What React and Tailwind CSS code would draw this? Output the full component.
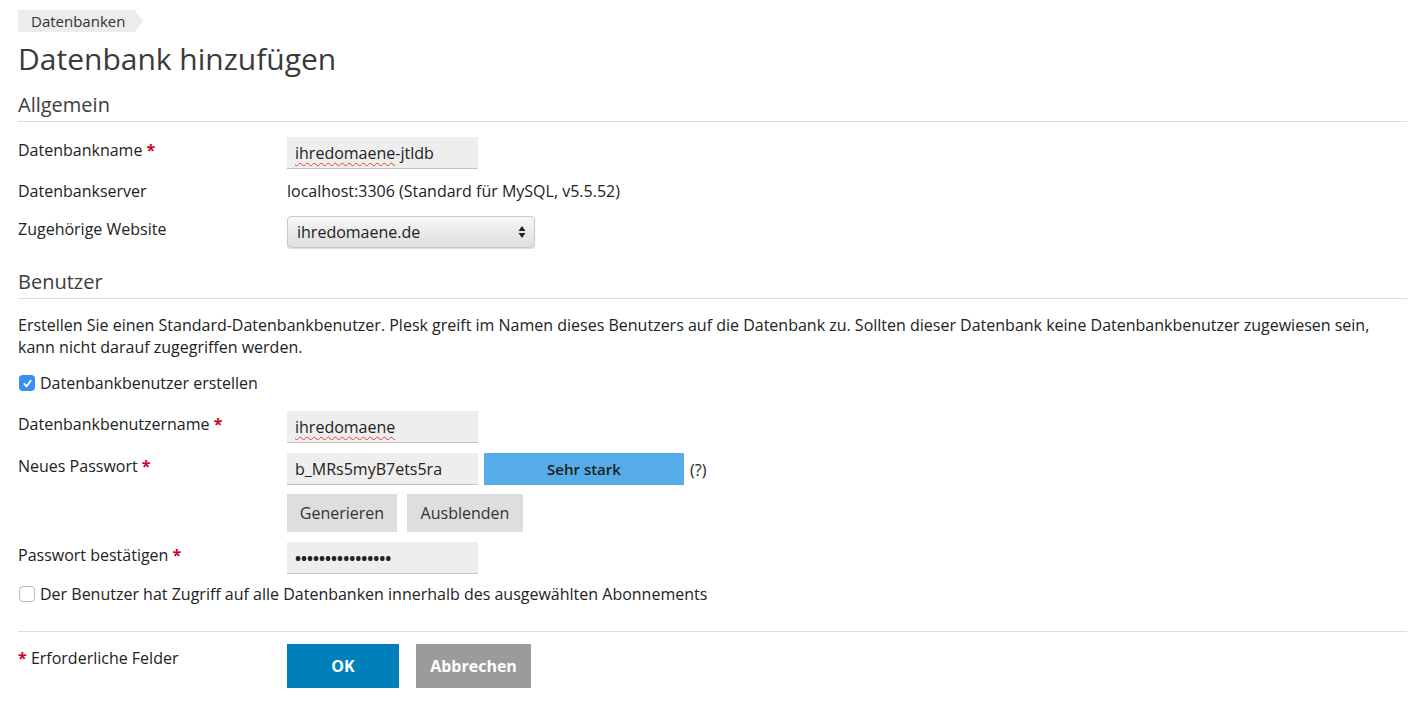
import React from "react";

const Req = () => <span className="text-[#d0021b] font-bold"> *</span>;

const Field = ({ children }) => (
  <div className="w-[191px] h-[32px] bg-[#eeeeee] border-b border-[#c4c4c4] px-2 flex items-center text-[16px] text-[#222]">
    {children}
  </div>
);

const Spell = ({ children }) => (
  <span className="underline decoration-wavy decoration-[#e0443a] decoration-1 underline-offset-[3px]">
    {children}
  </span>
);

const Row = ({ label, className = "", children }) => (
  <div className={"grid grid-cols-[269px_1fr] " + className}>
    <div className="leading-[26px] text-[#222]">{label}</div>
    <div>{children}</div>
  </div>
);

const Section = ({ title, className = "" }) => (
  <div
    className={
      "h-[31px] border-b border-[#dcdcdc] text-[20px] leading-[28px] text-[#3d3d3d] " +
      className
    }
  >
    {title}
  </div>
);

const Check = ({ checked }) =>
  checked ? (
    <span className="w-[16px] h-[16px] rounded-[4px] bg-[#3b8ff0] flex items-center justify-center">
      <svg width="11" height="11" viewBox="0 0 12 12">
        <path d="M2.5 6.5 L5 9 L9.5 3" fill="none" stroke="white" strokeWidth="2" strokeLinecap="round" strokeLinejoin="round" />
      </svg>
    </span>
  ) : (
    <span className="w-[16px] h-[16px] rounded-[4px] bg-white border border-[#b8b8b8]" />
  );

export default function App() {
  return (
    <div className="min-h-screen bg-white pl-[18px] pr-[20px] pt-[10px] text-[16px] text-[#222] font-['Open_Sans',sans-serif]">
      {/* breadcrumb */}
      <div className="w-fit h-[22px] bg-[#ececec] pl-[13px] pr-[18px] text-[15px] leading-[22px] text-[#333] [clip-path:polygon(0_0,calc(100%-9px)_0,100%_50%,calc(100%-9px)_100%,0_100%)]">
        Datenbanken
      </div>

      <h1 className="mt-[9px] text-[30px] leading-[36px] text-[#3a3a3a]">Datenbank hinzufügen</h1>

      <Section title="Allgemein" className="mt-[14px]" />

      <Row label={<>Datenbankname<Req /></>} className="mt-[15px]">
        <Field>
          <Spell>ihredomaene</Spell>-jtldb
        </Field>
      </Row>

      <Row label="Datenbankserver" className="mt-[9px]">
        <div className="leading-[26px]">localhost:3306 (Standard für MySQL, v5.5.52)</div>
      </Row>

      <Row label="Zugehörige Website" className="mt-[12px]">
        <div className="w-[248px] h-[32px] rounded-[4px] border border-[#c8c8c8] bg-gradient-to-b from-[#f7f7f7] to-[#dedede] shadow-[0_1px_1px_rgba(0,0,0,0.15)] flex items-center justify-between pl-[9px] pr-[8px]">
          <span>ihredomaene.de</span>
          <svg width="8" height="14" viewBox="0 0 8 14">
            <path d="M4 1 L7.5 6 H0.5 Z M4 13 L0.5 8 H7.5 Z" fill="#222" />
          </svg>
        </div>
      </Row>

      <Section title="Benutzer" className="mt-[20px]" />

      <p className="mt-[15px] leading-[22px]">
        Erstellen Sie einen Standard-Datenbankbenutzer. Plesk greift im Namen dieses Benutzers auf die Datenbank zu. Sollten dieser Datenbank keine Datenbankbenutzer zugewiesen sein, kann nicht darauf zugegriffen werden.
      </p>

      <label className="mt-[13px] flex items-center gap-[5px] leading-[24px] pl-[1px]">
        <Check checked />
        <span>Datenbankbenutzer erstellen</span>
      </label>

      <Row label={<>Datenbankbenutzername<Req /></>} className="mt-[16px]">
        <Field>
          <Spell>ihredomaene</Spell>
        </Field>
      </Row>

      <Row label={<>Neues Passwort<Req /></>} className="mt-[10px]">
        <div className="flex items-center">
          <Field>b_MRs5myB7ets5ra</Field>
          <div className="ml-[6px] w-[200px] h-[32px] bg-[#55ace6] flex items-center justify-center font-semibold text-[15px] text-[#1c1c1c]">
            Sehr stark
          </div>
          <span className="ml-[6px] text-[16px] mt-[2px]">(?)</span>
        </div>
        <div className="mt-[9px] flex gap-[10px]">
          <button className="w-[110px] h-[38px] bg-[#dedede] text-[#333]">Generieren</button>
          <button className="w-[116px] h-[38px] bg-[#dedede] text-[#333]">Ausblenden</button>
        </div>
      </Row>

      <Row label={<>Passwort bestätigen<Req /></>} className="mt-[10px]">
        <Field>
          <span className="text-[16px] font-bold">••••••••••••••••</span>
        </Field>
      </Row>

      <label className="mt-[8px] flex items-center gap-[5px] leading-[24px] pl-[1px]">
        <Check />
        <span>Der Benutzer hat Zugriff auf alle Datenbanken innerhalb des ausgewählten Abonnements</span>
      </label>

      <div className="mt-[25px] border-t border-[#dcdcdc]" />

      <div className="mt-[12px] grid grid-cols-[269px_1fr]">
        <div className="mt-[1px] leading-[26px]">
          <span className="text-[#d0021b] font-bold">*</span> Erforderliche Felder
        </div>
        <div className="flex gap-[17px]">
          <button className="w-[112px] h-[44px] bg-[#0080ba] text-white font-bold">OK</button>
          <button className="w-[115px] h-[44px] bg-[#9b9b9b] text-white font-bold">Abbrechen</button>
        </div>
      </div>
    </div>
  );
}
